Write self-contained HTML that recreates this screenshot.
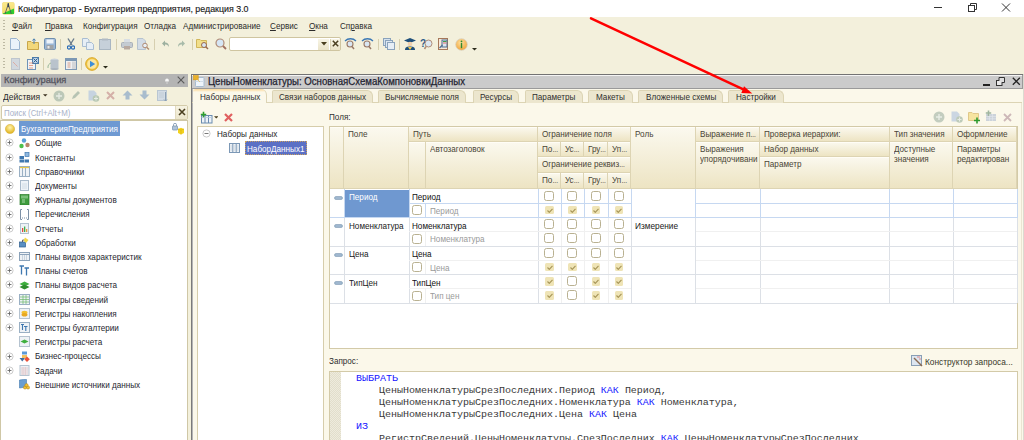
<!DOCTYPE html>
<html><head><meta charset="utf-8"><style>
html,body{margin:0;padding:0;width:1024px;height:440px;overflow:hidden;background:#F3F0DC}
body{position:relative;font-family:"Liberation Sans",sans-serif}
.r{position:absolute}
.t{position:absolute;white-space:nowrap;line-height:1;transform-origin:0 0}
.t u{text-decoration:underline;text-underline-offset:1px}
.el{font-style:normal;display:inline-block;transform:scaleX(.7);transform-origin:0 0}
.c{position:absolute;white-space:pre;font-family:"Liberation Mono",monospace;font-size:8.6px;line-height:1;color:#383838;transform:scaleX(1.16279);transform-origin:0 0}
.c .k,.c b.k{color:#1414FF;font-weight:normal}
</style></head><body>
<div class="r" style="left:0px;top:0px;width:1024px;height:17px;background:#fff"></div>
<svg class="r" style="left:1.5px;top:2px" width="13" height="13" viewBox="0 0 13 13">
<defs><linearGradient id="ig" x1="0" y1="0" x2="0" y2="1"><stop offset="0" stop-color="#FBEA8E"/><stop offset="1" stop-color="#F2D860"/></linearGradient></defs>
<rect x="0.3" y="0.3" width="12" height="12" rx="1.8" fill="url(#ig)" stroke="#F0D878" stroke-width="0.6"/>
<path d="M0.8 11.6 L12 6.5 L12 12 L0.8 12 Z" fill="#2ECC2E"/>
<path d="M6.3 2 L3 12 M6.3 2 L9.3 12" stroke="#4a5060" stroke-width="0.8" fill="none"/>
<rect x="5.6" y="1.2" width="1.4" height="4" fill="#3a4658"/>
</svg>
<div class="t" style="left:17.5px;top:4.78px;font-size:9.2px;transform:scaleX(0.9630434782608696);color:#1a1a1a;font-weight:normal;-webkit-text-stroke:0.15px #1a1a1a;">Конфигуратор - Бухгалтерия предприятия, редакция 3.0</div>
<div class="r" style="left:934px;top:7px;width:8px;height:1px;background:#333"></div>
<svg class="r" style="left:966px;top:3px" width="11" height="10"><rect x="2.5" y="2.5" width="6" height="6" fill="none" stroke="#333"/><path d="M4.5 2.5 V0.5 H10.5 V6.5 H8.5" fill="none" stroke="#333"/></svg>
<svg class="r" style="left:1001px;top:3px" width="10" height="9"><path d="M1 0.5 L9 8.5 M9 0.5 L1 8.5" stroke="#333" stroke-width="1"/></svg>
<div class="r" style="left:0px;top:17px;width:1024px;height:423px;background:#F3F0DC"></div>
<div class="r" style="left:2.5px;top:20px;width:2px;height:1.2px;background:#BDB9A3"></div>
<div class="r" style="left:2.5px;top:23px;width:2px;height:1.2px;background:#BDB9A3"></div>
<div class="r" style="left:2.5px;top:26px;width:2px;height:1.2px;background:#BDB9A3"></div>
<div class="r" style="left:2.5px;top:29px;width:2px;height:1.2px;background:#BDB9A3"></div>
<div class="t" style="left:12.3px;top:21.01px;font-size:9.4px;transform:scaleX(0.8670212765957445);color:#2b2b2b;font-weight:normal;"><u>Ф</u>айл</div>
<div class="t" style="left:44.8px;top:21.01px;font-size:9.4px;transform:scaleX(0.8670212765957445);color:#2b2b2b;font-weight:normal;"><u>П</u>равка</div>
<div class="t" style="left:82.6px;top:21.01px;font-size:9.4px;transform:scaleX(0.8670212765957445);color:#2b2b2b;font-weight:normal;">Конфигурация</div>
<div class="t" style="left:143.6px;top:21.01px;font-size:9.4px;transform:scaleX(0.8670212765957445);color:#2b2b2b;font-weight:normal;">Отладка</div>
<div class="t" style="left:182.7px;top:21.01px;font-size:9.4px;transform:scaleX(0.8670212765957445);color:#2b2b2b;font-weight:normal;">Администрирование</div>
<div class="t" style="left:270px;top:21.01px;font-size:9.4px;transform:scaleX(0.8670212765957445);color:#2b2b2b;font-weight:normal;"><u>С</u>ервис</div>
<div class="t" style="left:309px;top:21.01px;font-size:9.4px;transform:scaleX(0.8670212765957445);color:#2b2b2b;font-weight:normal;"><u>О</u>кна</div>
<div class="t" style="left:339.8px;top:21.01px;font-size:9.4px;transform:scaleX(0.8670212765957445);color:#2b2b2b;font-weight:normal;">Сп<u>р</u>авка</div>
<div class="r" style="left:2.5px;top:39px;width:2px;height:1.2px;background:#BDB9A3"></div>
<div class="r" style="left:2.5px;top:42px;width:2px;height:1.2px;background:#BDB9A3"></div>
<div class="r" style="left:2.5px;top:45px;width:2px;height:1.2px;background:#BDB9A3"></div>
<div class="r" style="left:2.5px;top:48px;width:2px;height:1.2px;background:#BDB9A3"></div>
<div class="r" style="left:2.5px;top:58px;width:2px;height:1.2px;background:#BDB9A3"></div>
<div class="r" style="left:2.5px;top:61px;width:2px;height:1.2px;background:#BDB9A3"></div>
<div class="r" style="left:2.5px;top:64px;width:2px;height:1.2px;background:#BDB9A3"></div>
<div class="r" style="left:2.5px;top:67px;width:2px;height:1.2px;background:#BDB9A3"></div>
<svg class="r" style="left:10px;top:38px" width="10" height="12" viewBox="0 0 10 12"><path d="M0.5 0.5 H6.5 L9.5 3.5 V11.5 H0.5 Z" fill="#EAF2FA" stroke="#9BB4CF"/></svg>
<svg class="r" style="left:27px;top:38px" width="12" height="12" viewBox="0 0 12 12"><path d="M0.5 3.5 H4 L5 4.5 H11.5 V11.5 H0.5 Z" fill="#F2D77A" stroke="#C9A64A"/><path d="M7 1 V6 M5.5 2.5 L7 0.8 L8.5 2.5" stroke="#4A7FB0" fill="none"/></svg>
<svg class="r" style="left:43.5px;top:38px" width="12" height="12" viewBox="0 0 12 12"><rect x="0.5" y="0.5" width="11" height="11" rx="1.2" fill="#9DB9D8" stroke="#6F8FAF"/><rect x="2.5" y="1.5" width="7" height="4" fill="#EEF4FA"/><rect x="2.5" y="7" width="7" height="4.5" fill="#A0A4A8"/><rect x="3.5" y="8" width="2" height="2.5" fill="#E8E8E8"/></svg>
<div class="r" style="left:60px;top:39px;width:1px;height:11px;background:#D6CFB0"></div>
<svg class="r" style="left:67px;top:38px" width="8" height="12" viewBox="0 0 8 12"><path d="M1 0.5 L5 7 M7 0.5 L3 7" stroke="#6A7B8C" stroke-width="1.4"/><circle cx="2" cy="9.5" r="1.6" fill="none" stroke="#2F6FB8" stroke-width="1.2"/><circle cx="6" cy="9.5" r="1.6" fill="none" stroke="#2F6FB8" stroke-width="1.2"/></svg>
<svg class="r" style="left:82px;top:38px" width="12" height="12" viewBox="0 0 12 12"><path d="M0.5 0.5 H5.5 L7 2 V8.5 H0.5 Z" fill="#E6EEF6" stroke="#A9BDD2"/><path d="M4.5 4.5 H9.5 L11.5 6.5 V11.5 H4.5 Z" fill="#E6EEF6" stroke="#A9BDD2"/></svg>
<svg class="r" style="left:99px;top:38px" width="12" height="12" viewBox="0 0 12 12"><rect x="0.5" y="1.5" width="11" height="10" fill="#C6D0DA" stroke="#A9B6C2"/><rect x="3" y="0.5" width="6" height="2" fill="#B0BAC4"/></svg>
<div class="r" style="left:115.5px;top:39px;width:1px;height:11px;background:#D6CFB0"></div>
<svg class="r" style="left:120.5px;top:38px" width="12" height="12" viewBox="0 0 12 12"><rect x="0.5" y="4.5" width="11" height="5" rx="1" fill="#C4CBD2" stroke="#A9B0B8"/><rect x="3" y="1" width="6" height="3.5" fill="#D8DEE4"/><rect x="3" y="8" width="6" height="3.5" fill="#B8A9A0"/></svg>
<svg class="r" style="left:137px;top:38px" width="13" height="12" viewBox="0 0 13 12"><path d="M0.5 0.5 H6 L8.5 3 V11.5 H0.5 Z" fill="#D3DCE6" stroke="#B6C3CF"/><circle cx="8" cy="7.5" r="2.3" fill="#E8EEF4" stroke="#B08A70"/><path d="M9.6 9.2 L12 11.5" stroke="#B08A70" stroke-width="1.4"/></svg>
<div class="r" style="left:153.5px;top:39px;width:1px;height:11px;background:#D6CFB0"></div>
<svg class="r" style="left:161.5px;top:40px" width="8" height="8" viewBox="0 0 8 8"><path d="M7 7 C7 3.5 5 2.5 3 2.5 V0.5 L0 3.5 L3 6.5 V4.5 C4.5 4.5 6 5 7 7Z" fill="#9DB0A0"/></svg>
<svg class="r" style="left:177px;top:40px" width="8" height="8" viewBox="0 0 8 8"><path d="M1 7 C1 3.5 3 2.5 5 2.5 V0.5 L8 3.5 L5 6.5 V4.5 C3.5 4.5 2 5 1 7Z" fill="#A8BBAA"/></svg>
<div class="r" style="left:191.5px;top:39px;width:1px;height:11px;background:#D6CFB0"></div>
<svg class="r" style="left:196px;top:38px" width="13" height="12" viewBox="0 0 13 12"><path d="M0.5 1.5 H4 L5 2.5 H10.5 V9.5 H0.5 Z" fill="#F2DF8A" stroke="#D1B65A"/><circle cx="8" cy="7" r="2.5" fill="#D9E6F2" stroke="#9A6A50"/><path d="M9.8 8.8 L12 11" stroke="#9A6A50" stroke-width="1.5"/></svg>
<svg class="r" style="left:215px;top:38px" width="12" height="12" viewBox="0 0 12 12"><circle cx="5" cy="5" r="4" fill="#D6E6F5" stroke="#B08C78" stroke-width="1.2"/><path d="M8 8 L11 11" stroke="#A07060" stroke-width="1.8"/></svg>
<div class="r" style="left:229px;top:37.3px;width:111.5px;height:13.5px;background:#fff;border:1px solid #CFC5A0;border-radius:2px;box-sizing:border-box"></div>
<div class="r" style="left:318px;top:38.5px;width:11px;height:11px;background:linear-gradient(#F8F5E6,#EAE3C8)"></div>
<div class="r" style="left:329.5px;top:38.5px;width:10.5px;height:11px;background:linear-gradient(#F8F5E6,#EAE3C8);border-left:1px solid #DDD5B8;box-sizing:border-box"></div>
<svg class="r" style="left:320.5px;top:42px" width="6" height="4" viewBox="0 0 6 4"><path d="M0 0 H6 L3 3.5Z" fill="#4a3f20"/></svg>
<svg class="r" style="left:331.5px;top:40px" width="7" height="7" viewBox="0 0 7 7"><path d="M0.8 0.8 L6.2 6.2 M6.2 0.8 L0.8 6.2" stroke="#4a3f20" stroke-width="1.5"/></svg>
<svg class="r" style="left:344px;top:38px" width="13" height="12" viewBox="0 0 13 12"><path d="M1 3 C4 0 9 0 12 3" stroke="#3B78B5" stroke-width="1.3" fill="none"/><circle cx="6" cy="6" r="3" fill="#D9E6F2" stroke="#9A7A68" stroke-width="1.1"/><path d="M8 8.5 L10 11" stroke="#9A7A68" stroke-width="1.5"/></svg>
<svg class="r" style="left:361px;top:38px" width="13" height="12" viewBox="0 0 13 12"><path d="M1 3 C4 0 9 0 12 3" stroke="#3B78B5" stroke-width="1.3" fill="none"/><circle cx="6" cy="6" r="3" fill="#D9E6F2" stroke="#9A7A68" stroke-width="1.1"/><path d="M8 8.5 L10 11" stroke="#9A7A68" stroke-width="1.5"/></svg>
<div class="r" style="left:377.5px;top:39px;width:1px;height:11px;background:#D6CFB0"></div>
<svg class="r" style="left:383px;top:38px" width="12" height="12" viewBox="0 0 12 12"><rect x="0.5" y="0.5" width="7" height="7" fill="#D5E2EE" stroke="#8AA3BC"/><rect x="2.5" y="2.5" width="7" height="7" fill="#DDE8F2" stroke="#8AA3BC"/><rect x="4.5" y="4.5" width="7" height="7" fill="#E6EEF6" stroke="#8AA3BC"/></svg>
<div class="r" style="left:398.5px;top:39px;width:1px;height:11px;background:#D6CFB0"></div>
<svg class="r" style="left:404px;top:38px" width="12" height="12" viewBox="0 0 12 12"><path d="M0 2.5 L6 0 L12 2.5 L6 5Z" fill="#1F4F7A"/><circle cx="6" cy="6" r="2.3" fill="#F2D2B0"/><path d="M1 12 C1 9 3 8.5 6 8.5 C9 8.5 11 9 11 12Z" fill="#1F4F7A"/><path d="M4 9 L6 12 L8 9" fill="#F2C94C"/></svg>
<svg class="r" style="left:420px;top:38px" width="13" height="12" viewBox="0 0 13 12"><text x="0" y="9" font-size="10" font-weight="bold" fill="#2A5A8A" font-family="Liberation Sans">?</text><circle cx="8.5" cy="5.5" r="3.5" fill="#DDE8F2" stroke="#B08C78"/><path d="M6 8.5 L4.5 11" stroke="#B08C78" stroke-width="1.5"/></svg>
<svg class="r" style="left:438px;top:38px" width="11" height="12" viewBox="0 0 11 12"><rect x="0.5" y="0.5" width="9" height="11" fill="#F8E8D8" stroke="#A6785A"/><rect x="4" y="2" width="5" height="7" fill="#DDE6EE" stroke="#4C6F94"/><path d="M5 3.5 H8.5" stroke="#3F9F4F"/><path d="M5 5 H8.5" stroke="#E26B6B"/><path d="M1.5 10 L4.5 7" stroke="#4C6F94" stroke-width="1.2"/></svg>
<svg class="r" style="left:455px;top:38px" width="13" height="13" viewBox="0 0 13 13"><defs><radialGradient id="og" cx="0.45" cy="0.35" r="0.65"><stop offset="0" stop-color="#FFE2A0"/><stop offset="1" stop-color="#F0A43A"/></radialGradient></defs><circle cx="6.5" cy="6.5" r="5.8" fill="url(#og)" stroke="#D8D0BE" stroke-width="0.8"/><circle cx="6.5" cy="3.4" r="0.9" fill="#2F8A2F"/><rect x="5.8" y="5" width="1.4" height="5.2" fill="#2F8A2F"/></svg>
<svg class="r" style="left:472px;top:47.5px" width="5" height="3" viewBox="0 0 5 3"><path d="M0 0 H5 L2.5 2.5Z" fill="#2b2b1b"/></svg>
<svg class="r" style="left:10.5px;top:57.5px" width="9" height="12" viewBox="0 0 9 12"><rect x="0.5" y="0.5" width="8" height="11" fill="#D2D8DE" stroke="#BFC6CD"/><path d="M2 4 L4.5 6.5 L6.5 8.5" stroke="#E0A090" fill="none" stroke-width="0.8"/></svg>
<svg class="r" style="left:27px;top:57.0px" width="12" height="13" viewBox="0 0 12 13"><rect x="0.5" y="2.5" width="8" height="10" fill="#F2F4F6" stroke="#6F93B8"/><rect x="5.5" y="0.5" width="6" height="6" fill="#BCD2E6" stroke="#4C7BAA"/><path d="M6.5 1.5 L10.5 5.5 M10.5 1.5 L6.5 5.5" stroke="#2F5F8F"/><path d="M2 6 H6 M2 8.5 H6 M2 11 H6" stroke="#E08A70" stroke-width="0.8"/></svg>
<div class="r" style="left:42.5px;top:58px;width:1px;height:12px;background:#D6CFB0"></div>
<svg class="r" style="left:47px;top:57.5px" width="12" height="12" viewBox="0 0 12 12"><ellipse cx="7.5" cy="2" rx="4" ry="1.6" fill="#C9D2DA"/><rect x="3.5" y="2" width="8" height="9" fill="#B9C3CC"/><ellipse cx="7.5" cy="11" rx="4" ry="1" fill="#A9B3BC"/><path d="M1 10 C0.5 7 2.5 5.5 4 5" stroke="#9AB89A" fill="none"/></svg>
<svg class="r" style="left:65px;top:57.5px" width="12" height="12" viewBox="0 0 12 12"><rect x="0.5" y="0.5" width="11" height="11" fill="#EEF0F2" stroke="#7C98B4"/><rect x="1" y="1" width="10" height="2" fill="#7C98B4"/><rect x="7" y="3.5" width="4" height="7.5" fill="#D4D6D8"/><path d="M2.5 5 H5.5 M2.5 7 H5.5 M2.5 9 H5.5" stroke="#D08A70" stroke-width="0.8"/></svg>
<div class="r" style="left:80.5px;top:58px;width:1px;height:12px;background:#D6CFB0"></div>
<svg class="r" style="left:85px;top:56.5px" width="14" height="14" viewBox="0 0 14 14"><circle cx="7" cy="7" r="6.3" fill="#F2C94C" stroke="#D9A520"/><circle cx="7" cy="7" r="4.8" fill="#FBE6A0"/><path d="M5 3.8 L10.2 7 L5 10.2Z" fill="#3E8ED8"/></svg>
<svg class="r" style="left:103px;top:66px" width="5" height="3" viewBox="0 0 5 3"><path d="M0 0 H5 L2.5 2.5Z" fill="#2b2b1b"/></svg>
<div class="r" style="left:1px;top:74px;width:187px;height:13px;background:#B4B4B4"></div>
<div class="t" style="left:3.5px;top:75.24px;font-size:9.6px;transform:scaleX(0.9687500000000001);color:#55555f;font-weight:normal;-webkit-text-stroke:0.3px #55555f;">Конфигурация</div>
<svg class="r" style="left:164px;top:76.5px" width="6" height="8" viewBox="0 0 6 8"><path d="M1.2 3.2 A1.8 1.8 0 0 1 4.8 3.2 V4.6 H1.2Z" fill="#F6F6F6"/><path d="M3 4.6 V7" stroke="#DADADA" stroke-width="0.8"/></svg>
<svg class="r" style="left:176.5px;top:75.8px" width="8" height="8" viewBox="0 0 8 8"><path d="M0.7 0.7 L7.3 7.3 M7.3 0.7 L0.7 7.3" stroke="#5c5c5c" stroke-width="1.15"/></svg>
<div class="t" style="left:3px;top:92.01px;font-size:9.4px;transform:scaleX(0.9042553191489361);color:#2b2b2b;font-weight:normal;">Действия</div>
<svg class="r" style="left:43px;top:94px" width="4.5" height="3" viewBox="0 0 4.5 3"><path d="M0 0.3 H4.5 L2.25 2.5Z" fill="#3b3320"/></svg>
<svg class="r" style="left:52.5px;top:90px" width="12" height="12" viewBox="0 0 12 12"><circle cx="6" cy="6" r="5.5" fill="#BCC8B8"/><path d="M6 3 V9 M3 6 H9" stroke="#E6ECE4" stroke-width="1.3"/></svg>
<svg class="r" style="left:71px;top:90px" width="10" height="10" viewBox="0 0 10 10"><path d="M1 9 L2 6 L7 1 L9 3 L4 8Z" fill="#B7C4B3"/></svg>
<svg class="r" style="left:88px;top:90px" width="12" height="12" viewBox="0 0 12 12"><path d="M0.5 0.5 H6 L8.5 3 V10.5 H0.5Z" fill="#C6D3E0"/><circle cx="8" cy="8.5" r="3.3" fill="#B8C8B4"/><path d="M8 6.5 V10.5 M6 8.5 H10" stroke="#E6ECE4"/></svg>
<svg class="r" style="left:106px;top:91px" width="9" height="9" viewBox="0 0 9 9"><path d="M1 1 L8 8 M8 1 L1 8" stroke="#D4B0A8" stroke-width="2"/></svg>
<svg class="r" style="left:122px;top:90px" width="11" height="10" viewBox="0 0 11 10"><path d="M5.5 0.5 L10.5 5.5 H7.5 V9.5 H3.5 V5.5 H0.5Z" fill="#A8BCCD"/></svg>
<svg class="r" style="left:139px;top:90px" width="11" height="10" viewBox="0 0 11 10"><path d="M5.5 9.5 L10.5 4.5 H7.5 V0.5 H3.5 V4.5 H0.5Z" fill="#A8BCCD"/></svg>
<svg class="r" style="left:157px;top:90px" width="11" height="12" viewBox="0 0 11 12"><rect x="0.5" y="0.5" width="9" height="10" fill="#D3DCE5" stroke="#B9C6D2"/><path d="M2 3 H7 M2 5 H7 M2 7 H7" stroke="#C0CCD6"/><path d="M8.5 2 V11 M7 9.5 L8.5 11 L10 9.5" stroke="#8CA0B4" fill="none"/></svg>
<div class="r" style="left:0.5px;top:105px;width:187.5px;height:14.5px;background:#fff;border:1px solid #D3CBAA;border-radius:2px;box-sizing:border-box"></div>
<div class="t" style="left:4px;top:107.51px;font-size:9.4px;transform:scaleX(0.8404255319148937);color:#A9B2C8;font-weight:normal;">Поиск (Ctrl+Alt+M)</div>
<div class="r" style="left:175px;top:106px;width:12px;height:12.5px;background:linear-gradient(#F6F3E2,#ECE6CC);border-left:1px solid #E2DAC0;box-sizing:border-box"></div>
<svg class="r" style="left:177.5px;top:108px" width="8" height="8" viewBox="0 0 8 8"><path d="M1 1 L7 7 M7 1 L1 7" stroke="#4a3f20" stroke-width="1.6"/></svg>
<div class="r" style="left:0px;top:120px;width:188px;height:320px;background:#fff;border:1px solid #CFC7A6;border-bottom:none;box-sizing:border-box"></div>
<div class="r" style="left:19px;top:121.2px;width:101px;height:14.4px;background:#6E99D2"></div>
<svg class="r" style="left:5px;top:123.5px" width="10" height="10" viewBox="0 0 10 10"><defs><radialGradient id="gy" cx="0.5" cy="0.35" r="0.6"><stop offset="0" stop-color="#FFF4B0"/><stop offset="1" stop-color="#E2B520"/></radialGradient></defs><circle cx="5" cy="5" r="4.6" fill="url(#gy)" stroke="#D9B340" stroke-width="0.6"/></svg>
<div class="t" style="left:21px;top:124.31px;font-size:9.4px;transform:scaleX(0.8670212765957445);color:#ffffff;font-weight:normal;">БухгалтерияПредприятия</div>
<svg class="r" style="left:171.5px;top:122.5px" width="13" height="12" viewBox="0 0 13 12"><rect x="0.5" y="3" width="5" height="4" rx="0.5" fill="#AFC3D8" stroke="#7690AA" stroke-width="0.7"/><path d="M1.5 3 V1.8 A1.5 1.5 0 0 1 4.5 1.8 V3" stroke="#7690AA" fill="none" stroke-width="0.8"/><path d="M6 6 L9 4.8 L12 6 V10 L9 11.5 L6 10Z" fill="#F2D21E"/><path d="M9 7 V11.5 M6 6 L9 7 L12 6" stroke="#D6B010" stroke-width="0.6" fill="none"/></svg>
<svg class="r" style="left:5px;top:138px" width="9" height="9" viewBox="0 0 9 9"><circle cx="4.5" cy="4.5" r="3.6" fill="#fff" stroke="#C4C4C4" stroke-width="0.9"/><path d="M4.5 2.5 V6.5 M2.5 4.5 H6.5" stroke="#6a6a6a" stroke-width="0.9"/></svg>
<svg class="r" style="left:19px;top:137.5px" width="11" height="11" viewBox="0 0 11 11"><circle cx="5" cy="2.5" r="2.2" fill="#5AA0D8"/><circle cx="2.5" cy="8" r="2.2" fill="#4CBF4C"/><circle cx="8.5" cy="7" r="2.2" fill="#B8866A"/></svg>
<div class="t" style="left:34.5px;top:138.41px;font-size:9.4px;transform:scaleX(0.8670212765957445);color:#1f1f2f;font-weight:normal;">Общие</div>
<svg class="r" style="left:5px;top:153px" width="9" height="9" viewBox="0 0 9 9"><circle cx="4.5" cy="4.5" r="3.6" fill="#fff" stroke="#C4C4C4" stroke-width="0.9"/><path d="M4.5 2.5 V6.5 M2.5 4.5 H6.5" stroke="#6a6a6a" stroke-width="0.9"/></svg>
<svg class="r" style="left:19px;top:151.7px" width="11" height="11" viewBox="0 0 11 11"><rect x="0.5" y="4" width="4.5" height="3" fill="#3F78B0"/><rect x="0.5" y="7.5" width="4.5" height="3" fill="#3F78B0"/><rect x="5.5" y="7.5" width="4.5" height="3" fill="#3F78B0"/><rect x="6" y="0.5" width="4" height="4" fill="#8FB8E0" stroke="#3F78B0" stroke-width="0.7"/></svg>
<div class="t" style="left:34.5px;top:152.61px;font-size:9.4px;transform:scaleX(0.8670212765957445);color:#1f1f2f;font-weight:normal;">Константы</div>
<svg class="r" style="left:5px;top:167px" width="9" height="9" viewBox="0 0 9 9"><circle cx="4.5" cy="4.5" r="3.6" fill="#fff" stroke="#C4C4C4" stroke-width="0.9"/><path d="M4.5 2.5 V6.5 M2.5 4.5 H6.5" stroke="#6a6a6a" stroke-width="0.9"/></svg>
<svg class="r" style="left:19px;top:165.9px" width="11" height="11" viewBox="0 0 11 11"><rect x="0.5" y="0.5" width="10" height="10" fill="#EEF2F6" stroke="#9AB0C4"/><path d="M3.5 1 V10 M6.5 1 V10" stroke="#9AB0C4"/><path d="M1 1.5 H10" stroke="#E8C84A" stroke-width="1.2"/></svg>
<div class="t" style="left:34.5px;top:166.81px;font-size:9.4px;transform:scaleX(0.8670212765957445);color:#1f1f2f;font-weight:normal;">Справочники</div>
<svg class="r" style="left:5px;top:181px" width="9" height="9" viewBox="0 0 9 9"><circle cx="4.5" cy="4.5" r="3.6" fill="#fff" stroke="#C4C4C4" stroke-width="0.9"/><path d="M4.5 2.5 V6.5 M2.5 4.5 H6.5" stroke="#6a6a6a" stroke-width="0.9"/></svg>
<svg class="r" style="left:19px;top:180.1px" width="11" height="11" viewBox="0 0 11 11"><rect x="1.5" y="0.5" width="8" height="10" fill="#EEF3F8" stroke="#A9BACB"/><path d="M3 4 H8 M3 6 H8 M3 8 H8" stroke="#C9D5E0" stroke-width="0.8"/></svg>
<div class="t" style="left:34.5px;top:181.01px;font-size:9.4px;transform:scaleX(0.8670212765957445);color:#1f1f2f;font-weight:normal;">Документы</div>
<svg class="r" style="left:5px;top:195px" width="9" height="9" viewBox="0 0 9 9"><circle cx="4.5" cy="4.5" r="3.6" fill="#fff" stroke="#C4C4C4" stroke-width="0.9"/><path d="M4.5 2.5 V6.5 M2.5 4.5 H6.5" stroke="#6a6a6a" stroke-width="0.9"/></svg>
<svg class="r" style="left:19px;top:194.3px" width="11" height="11" viewBox="0 0 11 11"><rect x="1" y="0.5" width="9" height="10.5" fill="#3E9C3E" stroke="#2E7E2E" stroke-width="0.7"/><rect x="2" y="1.5" width="7" height="3" fill="#7BC07B"/><path d="M3 6 H6 M3 8 H6" stroke="#C8E8C8" stroke-width="0.8"/></svg>
<div class="t" style="left:34.5px;top:195.21px;font-size:9.4px;transform:scaleX(0.8670212765957445);color:#1f1f2f;font-weight:normal;">Журналы документов</div>
<svg class="r" style="left:5px;top:210px" width="9" height="9" viewBox="0 0 9 9"><circle cx="4.5" cy="4.5" r="3.6" fill="#fff" stroke="#C4C4C4" stroke-width="0.9"/><path d="M4.5 2.5 V6.5 M2.5 4.5 H6.5" stroke="#6a6a6a" stroke-width="0.9"/></svg>
<svg class="r" style="left:19px;top:208.5px" width="11" height="11" viewBox="0 0 11 11"><path d="M3 0.5 H1.5 V10.5 H3 M8 0.5 H9.5 V10.5 H8" stroke="#7C90A6" fill="none"/><path d="M3 9 H8" stroke="#7C90A6" stroke-dasharray="1 1"/></svg>
<div class="t" style="left:34.5px;top:209.41px;font-size:9.4px;transform:scaleX(0.8670212765957445);color:#1f1f2f;font-weight:normal;">Перечисления</div>
<svg class="r" style="left:5px;top:224px" width="9" height="9" viewBox="0 0 9 9"><circle cx="4.5" cy="4.5" r="3.6" fill="#fff" stroke="#C4C4C4" stroke-width="0.9"/><path d="M4.5 2.5 V6.5 M2.5 4.5 H6.5" stroke="#6a6a6a" stroke-width="0.9"/></svg>
<svg class="r" style="left:19px;top:222.7px" width="11" height="11" viewBox="0 0 11 11"><rect x="1.5" y="0.5" width="8" height="10" fill="#EEF2F6" stroke="#B5C3D0"/><rect x="3" y="5" width="1.3" height="4" fill="#E24A3A"/><rect x="5" y="3.5" width="1.3" height="5.5" fill="#3FAF4F"/><rect x="7" y="6" width="1.3" height="3" fill="#E8A03A"/></svg>
<div class="t" style="left:34.5px;top:223.61px;font-size:9.4px;transform:scaleX(0.8670212765957445);color:#1f1f2f;font-weight:normal;">Отчеты</div>
<svg class="r" style="left:5px;top:238px" width="9" height="9" viewBox="0 0 9 9"><circle cx="4.5" cy="4.5" r="3.6" fill="#fff" stroke="#C4C4C4" stroke-width="0.9"/><path d="M4.5 2.5 V6.5 M2.5 4.5 H6.5" stroke="#6a6a6a" stroke-width="0.9"/></svg>
<svg class="r" style="left:19px;top:236.9px" width="11" height="11" viewBox="0 0 11 11"><rect x="0.5" y="5" width="6" height="5" fill="#5A8FC2" stroke="#2F5F8F" stroke-width="0.7"/><path d="M6 0.5 L9.5 3 L7 6 L4.5 3.5Z" fill="#F2D84A"/><path d="M3.5 5 V3 H5" stroke="#333" stroke-width="0.7" fill="none"/></svg>
<div class="t" style="left:34.5px;top:237.81px;font-size:9.4px;transform:scaleX(0.8670212765957445);color:#1f1f2f;font-weight:normal;">Обработки</div>
<svg class="r" style="left:5px;top:252px" width="9" height="9" viewBox="0 0 9 9"><circle cx="4.5" cy="4.5" r="3.6" fill="#fff" stroke="#C4C4C4" stroke-width="0.9"/><path d="M4.5 2.5 V6.5 M2.5 4.5 H6.5" stroke="#6a6a6a" stroke-width="0.9"/></svg>
<svg class="r" style="left:19px;top:251.1px" width="11" height="11" viewBox="0 0 11 11"><rect x="0.5" y="1.5" width="10" height="8" fill="#EEF2F6" stroke="#8CA3BA"/><path d="M1 3.5 H10" stroke="#8CA3BA"/><path d="M3.5 4 V9 M5.5 4 V9 M7.5 4 V9" stroke="#B0C0CE" stroke-width="0.6"/></svg>
<div class="t" style="left:34.5px;top:252.01px;font-size:9.4px;transform:scaleX(0.8670212765957445);color:#1f1f2f;font-weight:normal;">Планы видов характеристик</div>
<svg class="r" style="left:5px;top:266px" width="9" height="9" viewBox="0 0 9 9"><circle cx="4.5" cy="4.5" r="3.6" fill="#fff" stroke="#C4C4C4" stroke-width="0.9"/><path d="M4.5 2.5 V6.5 M2.5 4.5 H6.5" stroke="#6a6a6a" stroke-width="0.9"/></svg>
<svg class="r" style="left:19px;top:265.3px" width="11" height="11" viewBox="0 0 11 11"><path d="M0.5 1 H5 M2.5 1 V9.5 M5.5 3 H10 M7.5 3 V10.5" stroke="#3F78B0" stroke-width="1.3"/></svg>
<div class="t" style="left:34.5px;top:266.21px;font-size:9.4px;transform:scaleX(0.8670212765957445);color:#1f1f2f;font-weight:normal;">Планы счетов</div>
<svg class="r" style="left:5px;top:280px" width="9" height="9" viewBox="0 0 9 9"><circle cx="4.5" cy="4.5" r="3.6" fill="#fff" stroke="#C4C4C4" stroke-width="0.9"/><path d="M4.5 2.5 V6.5 M2.5 4.5 H6.5" stroke="#6a6a6a" stroke-width="0.9"/></svg>
<svg class="r" style="left:19px;top:279.5px" width="11" height="11" viewBox="0 0 11 11"><path d="M0.5 4 L5.5 1.5 L10.5 4 L5.5 6.5Z" fill="#3FAF3F"/><path d="M0.5 7 L5.5 4.5 L10.5 7 L5.5 9.5Z" fill="#2E8E2E"/></svg>
<div class="t" style="left:34.5px;top:280.41px;font-size:9.4px;transform:scaleX(0.8670212765957445);color:#1f1f2f;font-weight:normal;">Планы видов расчета</div>
<svg class="r" style="left:5px;top:295px" width="9" height="9" viewBox="0 0 9 9"><circle cx="4.5" cy="4.5" r="3.6" fill="#fff" stroke="#C4C4C4" stroke-width="0.9"/><path d="M4.5 2.5 V6.5 M2.5 4.5 H6.5" stroke="#6a6a6a" stroke-width="0.9"/></svg>
<svg class="r" style="left:19px;top:293.7px" width="11" height="11" viewBox="0 0 11 11"><rect x="0.5" y="0.5" width="10" height="10" fill="#EEF2F6" stroke="#9AB0C4"/><path d="M1 3 H10 M1 5.5 H10 M1 8 H10 M4 1 V10 M7 1 V10" stroke="#6CB86C" stroke-width="0.7"/></svg>
<div class="t" style="left:34.5px;top:294.61px;font-size:9.4px;transform:scaleX(0.8670212765957445);color:#1f1f2f;font-weight:normal;">Регистры сведений</div>
<svg class="r" style="left:5px;top:309px" width="9" height="9" viewBox="0 0 9 9"><circle cx="4.5" cy="4.5" r="3.6" fill="#fff" stroke="#C4C4C4" stroke-width="0.9"/><path d="M4.5 2.5 V6.5 M2.5 4.5 H6.5" stroke="#6a6a6a" stroke-width="0.9"/></svg>
<svg class="r" style="left:19px;top:307.9px" width="11" height="11" viewBox="0 0 11 11"><rect x="0.5" y="0.5" width="10" height="10" fill="#EEF2F6" stroke="#B5C3D0"/><ellipse cx="5.5" cy="4.5" rx="3" ry="1.8" fill="#F2C030"/><ellipse cx="5.5" cy="6.8" rx="3" ry="1.8" fill="#E8A820"/></svg>
<div class="t" style="left:34.5px;top:308.81px;font-size:9.4px;transform:scaleX(0.8670212765957445);color:#1f1f2f;font-weight:normal;">Регистры накопления</div>
<svg class="r" style="left:5px;top:323px" width="9" height="9" viewBox="0 0 9 9"><circle cx="4.5" cy="4.5" r="3.6" fill="#fff" stroke="#C4C4C4" stroke-width="0.9"/><path d="M4.5 2.5 V6.5 M2.5 4.5 H6.5" stroke="#6a6a6a" stroke-width="0.9"/></svg>
<svg class="r" style="left:19px;top:322.1px" width="11" height="11" viewBox="0 0 11 11"><rect x="0.5" y="0.5" width="10" height="10" fill="#EEF2F6" stroke="#9AB0C4"/><path d="M2 2.5 H5 M3.5 2.5 V8 M5 4.5 H8.5 M6.8 4.5 V9" stroke="#3F78B0" stroke-width="1.1"/></svg>
<div class="t" style="left:34.5px;top:323.01px;font-size:9.4px;transform:scaleX(0.8670212765957445);color:#1f1f2f;font-weight:normal;">Регистры бухгалтерии</div>
<svg class="r" style="left:19px;top:336.3px" width="11" height="11" viewBox="0 0 11 11"><rect x="0.5" y="0.5" width="10" height="10" fill="#EEF2F6" stroke="#B5C3D0"/><path d="M1.5 5.5 L5.5 3.5 L9.5 5.5 L5.5 7.5Z" fill="#3FAF3F"/></svg>
<div class="t" style="left:34.5px;top:337.21px;font-size:9.4px;transform:scaleX(0.8670212765957445);color:#1f1f2f;font-weight:normal;">Регистры расчета</div>
<svg class="r" style="left:5px;top:352px" width="9" height="9" viewBox="0 0 9 9"><circle cx="4.5" cy="4.5" r="3.6" fill="#fff" stroke="#C4C4C4" stroke-width="0.9"/><path d="M4.5 2.5 V6.5 M2.5 4.5 H6.5" stroke="#6a6a6a" stroke-width="0.9"/></svg>
<svg class="r" style="left:19px;top:350.5px" width="11" height="11" viewBox="0 0 11 11"><rect x="3" y="0.5" width="5" height="3" fill="#5A9AD8"/><rect x="3" y="4" width="5" height="3" fill="#F2C060"/><path d="M0.5 7 H6 L3.25 10.5Z" fill="#3F6F9F"/><path d="M8 5.5 L10.8 8.3 L8 11 L5.3 8.3Z" fill="#E8503A"/></svg>
<div class="t" style="left:34.5px;top:351.41px;font-size:9.4px;transform:scaleX(0.8670212765957445);color:#1f1f2f;font-weight:normal;">Бизнес-процессы</div>
<svg class="r" style="left:5px;top:366px" width="9" height="9" viewBox="0 0 9 9"><circle cx="4.5" cy="4.5" r="3.6" fill="#fff" stroke="#C4C4C4" stroke-width="0.9"/><path d="M4.5 2.5 V6.5 M2.5 4.5 H6.5" stroke="#6a6a6a" stroke-width="0.9"/></svg>
<svg class="r" style="left:19px;top:364.7px" width="11" height="11" viewBox="0 0 11 11"><rect x="1" y="0.5" width="9" height="10" fill="#EEF2F6" stroke="#B5C3D0"/><path d="M2.5 3 H8.5 M2.5 5 H8.5 M2.5 7 H8.5 M2.5 9 H8.5" stroke="#D08080" stroke-width="0.7" stroke-dasharray="1.2 0.6"/></svg>
<div class="t" style="left:34.5px;top:365.61px;font-size:9.4px;transform:scaleX(0.8670212765957445);color:#1f1f2f;font-weight:normal;">Задачи</div>
<svg class="r" style="left:19px;top:378.9px" width="11" height="11" viewBox="0 0 11 11"><path d="M0.5 1 L4.5 0.5 H7.5 V8 L0.5 9Z" fill="#6A9ED0" stroke="#3F78B0" stroke-width="0.6"/><circle cx="6" cy="8.5" r="1.6" fill="#F2C030" stroke="#B08010" stroke-width="0.5"/><circle cx="9" cy="8.5" r="1.6" fill="#F2C030" stroke="#B08010" stroke-width="0.5"/><circle cx="7.5" cy="6.2" r="1.6" fill="#F2C030" stroke="#B08010" stroke-width="0.5"/></svg>
<div class="t" style="left:34.5px;top:379.81px;font-size:9.4px;transform:scaleX(0.8670212765957445);color:#1f1f2f;font-weight:normal;">Внешние источники данных</div>
<div class="r" style="left:191px;top:74px;width:832px;height:366px;background:#FBF8EA"></div>
<div class="r" style="left:1022.5px;top:74px;width:1.5px;height:366px;background:#DCDAD0"></div>
<div class="r" style="left:191px;top:74px;width:831.5px;height:1px;background:#737373"></div>
<div class="r" style="left:191px;top:74px;width:1.3px;height:366px;background:#7A7A7A"></div>
<div class="r" style="left:192.3px;top:75px;width:0.8px;height:365px;background:#B5B5B5"></div>
<div class="r" style="left:192px;top:75px;width:830.5px;height:1px;background:#F4F4F4"></div>
<div class="r" style="left:192px;top:76px;width:830.5px;height:12.5px;background:#CBCBCB"></div>
<div class="r" style="left:1021.8px;top:75px;width:0.8px;height:14px;background:#9a9a9a"></div>
<div class="r" style="left:192px;top:88px;width:830.5px;height:0.8px;background:#9A9A9A"></div>
<svg class="r" style="left:193px;top:75px" width="12" height="13" viewBox="0 0 12 13"><rect x="2.5" y="2.5" width="8.5" height="9" rx="0.8" fill="#EEF4FA" stroke="#A8BCD0"/><rect x="2.5" y="6" width="8.5" height="1" fill="#D0DCE8"/><rect x="0.6" y="0.6" width="4.6" height="4.2" fill="#EAB22A" stroke="#D89A18" stroke-width="0.6"/><path d="M4.5 4.5 L7 7" stroke="#E0B860" stroke-width="0.8"/></svg>
<div class="t" style="left:208px;top:76.28px;font-size:10.5px;transform:scaleX(0.917142857142857);color:#1e1e30;font-weight:normal;-webkit-text-stroke:0.25px #1e1e30;">ЦеныНоменклатуры: ОсновнаяСхемаКомпоновкиДанных</div>
<div class="r" style="left:983px;top:84.2px;width:6.5px;height:1.4px;background:#222"></div>
<svg class="r" style="left:995.5px;top:76.5px" width="10" height="10" viewBox="0 0 10 10"><rect x="0.5" y="3.5" width="5.5" height="5" fill="#E8E8E8" stroke="#333"/><path d="M3 3.5 V0.5 H8.5 V5.5 H6" fill="#DDD" stroke="#333"/></svg>
<svg class="r" style="left:1011.5px;top:76.9px" width="9" height="9" viewBox="0 0 9 9"><path d="M0.8 0.8 L7.8 7.8 M7.8 0.8 L0.8 7.8" stroke="#222" stroke-width="1.3"/></svg>
<div class="r" style="left:192px;top:102.3px;width:830px;height:1px;background:#DCD4B4"></div>
<div class="r" style="left:193px;top:89.3px;width:73.5px;height:14px;background:linear-gradient(#F9D89A,#FCE7BE 1.5px,#FBF8EA 3px);border-right:1px solid #DCD4B4;border-radius:3px 6px 0 0;box-sizing:border-box"></div>
<div class="t" style="left:199.7px;top:92.01px;font-size:9.4px;transform:scaleX(0.8670212765957445);color:#2f2f2f;font-weight:normal;">Наборы данных</div>
<div class="r" style="left:271.7px;top:89.5px;width:101.60000000000002px;height:13px;background:#ECE6CE;border:1px solid #DCD4B4;border-bottom:none;border-radius:2px 6px 0 0;box-sizing:border-box"></div>
<div class="t" style="left:278.7px;top:92.01px;font-size:9.4px;transform:scaleX(0.8670212765957445);color:#2f2f2f;font-weight:normal;">Связи наборов данных</div>
<div class="r" style="left:378px;top:89.5px;width:88.30000000000001px;height:13px;background:#ECE6CE;border:1px solid #DCD4B4;border-bottom:none;border-radius:2px 6px 0 0;box-sizing:border-box"></div>
<div class="t" style="left:384.7px;top:92.01px;font-size:9.4px;transform:scaleX(0.8670212765957445);color:#2f2f2f;font-weight:normal;">Вычисляемые поля</div>
<div class="r" style="left:472.5px;top:89.5px;width:46.89999999999998px;height:13px;background:#ECE6CE;border:1px solid #DCD4B4;border-bottom:none;border-radius:2px 6px 0 0;box-sizing:border-box"></div>
<div class="t" style="left:479.5px;top:92.01px;font-size:9.4px;transform:scaleX(0.8670212765957445);color:#2f2f2f;font-weight:normal;">Ресурсы</div>
<div class="r" style="left:524.8px;top:89.5px;width:58.60000000000002px;height:13px;background:#ECE6CE;border:1px solid #DCD4B4;border-bottom:none;border-radius:2px 6px 0 0;box-sizing:border-box"></div>
<div class="t" style="left:531.5px;top:92.01px;font-size:9.4px;transform:scaleX(0.8670212765957445);color:#2f2f2f;font-weight:normal;">Параметры</div>
<div class="r" style="left:588.1px;top:89.5px;width:44.60000000000002px;height:13px;background:#ECE6CE;border:1px solid #DCD4B4;border-bottom:none;border-radius:2px 6px 0 0;box-sizing:border-box"></div>
<div class="t" style="left:595.6px;top:92.01px;font-size:9.4px;transform:scaleX(0.8670212765957445);color:#2f2f2f;font-weight:normal;">Макеты</div>
<div class="r" style="left:638px;top:89.5px;width:85.39999999999998px;height:13px;background:#ECE6CE;border:1px solid #DCD4B4;border-bottom:none;border-radius:2px 6px 0 0;box-sizing:border-box"></div>
<div class="t" style="left:645.6px;top:92.01px;font-size:9.4px;transform:scaleX(0.8670212765957445);color:#2f2f2f;font-weight:normal;">Вложенные схемы</div>
<div class="r" style="left:728px;top:89.5px;width:56.39999999999998px;height:13px;background:#ECE6CE;border:1px solid #DCD4B4;border-bottom:none;border-radius:2px 6px 0 0;box-sizing:border-box"></div>
<div class="t" style="left:736px;top:92.01px;font-size:9.4px;transform:scaleX(0.8670212765957445);color:#2f2f2f;font-weight:normal;">Настройки</div>
<div class="r" style="left:1021.3px;top:103px;width:1px;height:337px;background:#EAE5D2"></div>
<svg class="r" style="left:199.5px;top:111px" width="13" height="13" viewBox="0 0 13 13"><rect x="1.5" y="4.5" width="10.5" height="7.5" fill="#EEF3F8" stroke="#6A8CB0"/><path d="M5 5 V12 M8.5 5 V12" stroke="#6A8CB0"/><path d="M1.5 6.5 H12" stroke="#B8CADC" stroke-width="0.8"/><path d="M3.5 0.8 V6.2 M0.8 3.5 H6.2" stroke="#2EA02E" stroke-width="1.6"/></svg>
<svg class="r" style="left:213.5px;top:115.5px" width="4.5" height="3" viewBox="0 0 4.5 3"><path d="M0 0.3 H4.5 L2.25 2.5Z" fill="#4a3f20"/></svg>
<svg class="r" style="left:224px;top:112.5px" width="9" height="9" viewBox="0 0 9 9"><path d="M1 1 L8 8 M8 1 L1 8" stroke="#E06060" stroke-width="2.2"/></svg>
<div class="r" style="left:197px;top:126px;width:127px;height:314px;background:#fff;border:1px solid #D6CDAB;border-bottom:none;box-sizing:border-box"></div>
<svg class="r" style="left:202px;top:129px" width="9" height="9" viewBox="0 0 9 9"><circle cx="4.5" cy="4.5" r="3.6" fill="#fff" stroke="#C4C4C4" stroke-width="0.9"/><path d="M2.5 4.5 H6.5" stroke="#6a6a6a" stroke-width="0.9"/></svg>
<div class="t" style="left:217px;top:129.21px;font-size:9.4px;transform:scaleX(0.8670212765957445);color:#1f1f1f;font-weight:normal;">Наборы данных</div>
<svg class="r" style="left:229px;top:143px" width="11" height="10" viewBox="0 0 11 10"><rect x="0.5" y="0.5" width="10" height="9" fill="#EEF2F6" stroke="#7C98B6"/><path d="M3.8 1 V9 M7.2 1 V9" stroke="#7C98B6"/><path d="M1.5 3 H3 M1.5 5 H3 M1.5 7 H3 M4.8 3 H6.2 M4.8 5 H6.2 M4.8 7 H6.2 M8 3 H9.5 M8 5 H9.5 M8 7 H9.5" stroke="#B8C8D8" stroke-width="0.6"/></svg>
<div class="r" style="left:244.5px;top:141px;width:62px;height:14px;background:#5B70C5;outline:1px dotted #C9A060;outline-offset:-1px"></div>
<div class="t" style="left:246.5px;top:143.51px;font-size:9.4px;transform:scaleX(0.8670212765957445);color:#ffffff;font-weight:normal;">НаборДанных1</div>
<div class="t" style="left:328.8px;top:111.61px;font-size:9.4px;transform:scaleX(0.8670212765957445);color:#2f2f2f;font-weight:normal;">Поля:</div>
<div class="r" style="left:328.5px;top:126px;width:689.5px;height:222.5px;background:#fff;border:1px solid #D3CAA8;box-sizing:border-box"></div>
<div class="r" style="left:330px;top:127px;width:14px;height:62px;background:linear-gradient(#FBF9EF,#EDE4C3);border-right:1px solid #DDD4B3;border-bottom:1px solid #DDD4B3;box-sizing:border-box;box-shadow:inset 0 1px 0 #FFFDF6"></div>
<div class="r" style="left:344px;top:127px;width:65px;height:62px;background:linear-gradient(#FBF9EF,#EDE4C3);border-right:1px solid #DDD4B3;border-bottom:1px solid #DDD4B3;box-sizing:border-box;box-shadow:inset 0 1px 0 #FFFDF6"></div>
<div class="t" style="left:347.5px;top:129.11px;font-size:9.4px;transform:scaleX(0.8670212765957445);color:#4a4536;font-weight:normal;">Поле</div>
<div class="r" style="left:409px;top:127px;width:129px;height:15px;background:linear-gradient(#FBF9EF,#EDE4C3);border-right:1px solid #DDD4B3;border-bottom:1px solid #DDD4B3;box-sizing:border-box;box-shadow:inset 0 1px 0 #FFFDF6"></div>
<div class="t" style="left:412.5px;top:129.11px;font-size:9.4px;transform:scaleX(0.8670212765957445);color:#4a4536;font-weight:normal;">Путь</div>
<div class="r" style="left:409px;top:142px;width:17px;height:47px;background:linear-gradient(#FBF9EF,#EDE4C3);border-right:1px solid #DDD4B3;border-bottom:1px solid #DDD4B3;box-sizing:border-box;box-shadow:inset 0 1px 0 #FFFDF6"></div>
<div class="r" style="left:426px;top:142px;width:112px;height:47px;background:linear-gradient(#FBF9EF,#EDE4C3);border-right:1px solid #DDD4B3;border-bottom:1px solid #DDD4B3;box-sizing:border-box;box-shadow:inset 0 1px 0 #FFFDF6"></div>
<div class="t" style="left:429.5px;top:144.11px;font-size:9.4px;transform:scaleX(0.8670212765957445);color:#4a4536;font-weight:normal;">Автозаголовок</div>
<div class="r" style="left:538px;top:127px;width:93px;height:15px;background:linear-gradient(#FBF9EF,#EDE4C3);border-right:1px solid #DDD4B3;border-bottom:1px solid #DDD4B3;box-sizing:border-box;box-shadow:inset 0 1px 0 #FFFDF6"></div>
<div class="t" style="left:541.5px;top:129.11px;font-size:9.4px;transform:scaleX(0.8670212765957445);color:#4a4536;font-weight:normal;">Ограничение поля</div>
<div class="r" style="left:538px;top:142px;width:23px;height:15px;background:linear-gradient(#FBF9EF,#EDE4C3);border-right:1px solid #DDD4B3;border-bottom:1px solid #DDD4B3;box-sizing:border-box;box-shadow:inset 0 1px 0 #FFFDF6"></div>
<div class="t" style="left:541.5px;top:144.11px;font-size:9.4px;transform:scaleX(0.8670212765957445);color:#4a4536;font-weight:normal;">По<i class="el">…</i></div>
<div class="r" style="left:538px;top:173px;width:23px;height:16px;background:linear-gradient(#FBF9EF,#EDE4C3);border-right:1px solid #DDD4B3;border-bottom:1px solid #DDD4B3;box-sizing:border-box;box-shadow:inset 0 1px 0 #FFFDF6"></div>
<div class="t" style="left:541.5px;top:175.11px;font-size:9.4px;transform:scaleX(0.8670212765957445);color:#4a4536;font-weight:normal;">По<i class="el">…</i></div>
<div class="r" style="left:561px;top:142px;width:23px;height:15px;background:linear-gradient(#FBF9EF,#EDE4C3);border-right:1px solid #DDD4B3;border-bottom:1px solid #DDD4B3;box-sizing:border-box;box-shadow:inset 0 1px 0 #FFFDF6"></div>
<div class="t" style="left:564.5px;top:144.11px;font-size:9.4px;transform:scaleX(0.8670212765957445);color:#4a4536;font-weight:normal;">Ус<i class="el">…</i></div>
<div class="r" style="left:561px;top:173px;width:23px;height:16px;background:linear-gradient(#FBF9EF,#EDE4C3);border-right:1px solid #DDD4B3;border-bottom:1px solid #DDD4B3;box-sizing:border-box;box-shadow:inset 0 1px 0 #FFFDF6"></div>
<div class="t" style="left:564.5px;top:175.11px;font-size:9.4px;transform:scaleX(0.8670212765957445);color:#4a4536;font-weight:normal;">Ус<i class="el">…</i></div>
<div class="r" style="left:584px;top:142px;width:24px;height:15px;background:linear-gradient(#FBF9EF,#EDE4C3);border-right:1px solid #DDD4B3;border-bottom:1px solid #DDD4B3;box-sizing:border-box;box-shadow:inset 0 1px 0 #FFFDF6"></div>
<div class="t" style="left:587.5px;top:144.11px;font-size:9.4px;transform:scaleX(0.8670212765957445);color:#4a4536;font-weight:normal;">Гру<i class="el">…</i></div>
<div class="r" style="left:584px;top:173px;width:24px;height:16px;background:linear-gradient(#FBF9EF,#EDE4C3);border-right:1px solid #DDD4B3;border-bottom:1px solid #DDD4B3;box-sizing:border-box;box-shadow:inset 0 1px 0 #FFFDF6"></div>
<div class="t" style="left:587.5px;top:175.11px;font-size:9.4px;transform:scaleX(0.8670212765957445);color:#4a4536;font-weight:normal;">Гру<i class="el">…</i></div>
<div class="r" style="left:608px;top:142px;width:23px;height:15px;background:linear-gradient(#FBF9EF,#EDE4C3);border-right:1px solid #DDD4B3;border-bottom:1px solid #DDD4B3;box-sizing:border-box;box-shadow:inset 0 1px 0 #FFFDF6"></div>
<div class="t" style="left:611.5px;top:144.11px;font-size:9.4px;transform:scaleX(0.8670212765957445);color:#4a4536;font-weight:normal;">Уп<i class="el">…</i></div>
<div class="r" style="left:608px;top:173px;width:23px;height:16px;background:linear-gradient(#FBF9EF,#EDE4C3);border-right:1px solid #DDD4B3;border-bottom:1px solid #DDD4B3;box-sizing:border-box;box-shadow:inset 0 1px 0 #FFFDF6"></div>
<div class="t" style="left:611.5px;top:175.11px;font-size:9.4px;transform:scaleX(0.8670212765957445);color:#4a4536;font-weight:normal;">Уп<i class="el">…</i></div>
<div class="r" style="left:538px;top:157px;width:93px;height:16px;background:linear-gradient(#FBF9EF,#EDE4C3);border-right:1px solid #DDD4B3;border-bottom:1px solid #DDD4B3;box-sizing:border-box;box-shadow:inset 0 1px 0 #FFFDF6"></div>
<div class="t" style="left:541.5px;top:159.11px;font-size:9.4px;transform:scaleX(0.8670212765957445);color:#4a4536;font-weight:normal;">Ограничение реквиз<i class="el">…</i></div>
<div class="r" style="left:631px;top:127px;width:65px;height:62px;background:linear-gradient(#FBF9EF,#EDE4C3);border-right:1px solid #DDD4B3;border-bottom:1px solid #DDD4B3;box-sizing:border-box;box-shadow:inset 0 1px 0 #FFFDF6"></div>
<div class="t" style="left:634.5px;top:129.11px;font-size:9.4px;transform:scaleX(0.8670212765957445);color:#4a4536;font-weight:normal;">Роль</div>
<div class="r" style="left:696px;top:127px;width:64px;height:15px;background:linear-gradient(#FBF9EF,#EDE4C3);border-right:1px solid #DDD4B3;border-bottom:1px solid #DDD4B3;box-sizing:border-box;box-shadow:inset 0 1px 0 #FFFDF6"></div>
<div class="t" style="left:699.5px;top:129.11px;font-size:9.4px;transform:scaleX(0.8670212765957445);color:#4a4536;font-weight:normal;">Выражение п<i class="el">…</i></div>
<div class="r" style="left:696px;top:142px;width:64px;height:47px;background:linear-gradient(#FBF9EF,#EDE4C3);border-right:1px solid #DDD4B3;border-bottom:1px solid #DDD4B3;box-sizing:border-box;box-shadow:inset 0 1px 0 #FFFDF6"></div>
<div class="t" style="left:699.5px;top:144.11px;font-size:9.4px;transform:scaleX(0.8670212765957445);color:#4a4536;font-weight:normal;">Выражения</div>
<div class="t" style="left:699.5px;top:154.11px;font-size:9.4px;transform:scaleX(0.8670212765957445);color:#4a4536;font-weight:normal;">упорядочивани</div>
<div class="r" style="left:760px;top:127px;width:130px;height:15px;background:linear-gradient(#FBF9EF,#EDE4C3);border-right:1px solid #DDD4B3;border-bottom:1px solid #DDD4B3;box-sizing:border-box;box-shadow:inset 0 1px 0 #FFFDF6"></div>
<div class="t" style="left:763.5px;top:129.11px;font-size:9.4px;transform:scaleX(0.8670212765957445);color:#4a4536;font-weight:normal;">Проверка иерархии:</div>
<div class="r" style="left:760px;top:142px;width:130px;height:15px;background:linear-gradient(#FBF9EF,#EDE4C3);border-right:1px solid #DDD4B3;border-bottom:1px solid #DDD4B3;box-sizing:border-box;box-shadow:inset 0 1px 0 #FFFDF6"></div>
<div class="t" style="left:763.5px;top:144.11px;font-size:9.4px;transform:scaleX(0.8670212765957445);color:#4a4536;font-weight:normal;">Набор данных</div>
<div class="r" style="left:760px;top:157px;width:130px;height:32px;background:linear-gradient(#FBF9EF,#EDE4C3);border-right:1px solid #DDD4B3;border-bottom:1px solid #DDD4B3;box-sizing:border-box;box-shadow:inset 0 1px 0 #FFFDF6"></div>
<div class="t" style="left:763.5px;top:159.11px;font-size:9.4px;transform:scaleX(0.8670212765957445);color:#4a4536;font-weight:normal;">Параметр</div>
<div class="r" style="left:890px;top:127px;width:63px;height:15px;background:linear-gradient(#FBF9EF,#EDE4C3);border-right:1px solid #DDD4B3;border-bottom:1px solid #DDD4B3;box-sizing:border-box;box-shadow:inset 0 1px 0 #FFFDF6"></div>
<div class="t" style="left:893.5px;top:129.11px;font-size:9.4px;transform:scaleX(0.8670212765957445);color:#4a4536;font-weight:normal;">Тип значения</div>
<div class="r" style="left:890px;top:142px;width:63px;height:47px;background:linear-gradient(#FBF9EF,#EDE4C3);border-right:1px solid #DDD4B3;border-bottom:1px solid #DDD4B3;box-sizing:border-box;box-shadow:inset 0 1px 0 #FFFDF6"></div>
<div class="t" style="left:893.5px;top:144.11px;font-size:9.4px;transform:scaleX(0.8670212765957445);color:#4a4536;font-weight:normal;">Доступные</div>
<div class="t" style="left:893.5px;top:154.11px;font-size:9.4px;transform:scaleX(0.8670212765957445);color:#4a4536;font-weight:normal;">значения</div>
<div class="r" style="left:953px;top:127px;width:64px;height:15px;background:linear-gradient(#FBF9EF,#EDE4C3);border-right:1px solid #DDD4B3;border-bottom:1px solid #DDD4B3;box-sizing:border-box;box-shadow:inset 0 1px 0 #FFFDF6"></div>
<div class="t" style="left:956.5px;top:129.11px;font-size:9.4px;transform:scaleX(0.8670212765957445);color:#4a4536;font-weight:normal;">Оформление</div>
<div class="r" style="left:953px;top:142px;width:64px;height:47px;background:linear-gradient(#FBF9EF,#EDE4C3);border-right:1px solid #DDD4B3;border-bottom:1px solid #DDD4B3;box-sizing:border-box;box-shadow:inset 0 1px 0 #FFFDF6"></div>
<div class="t" style="left:956.5px;top:144.11px;font-size:9.4px;transform:scaleX(0.8670212765957445);color:#4a4536;font-weight:normal;">Параметры</div>
<div class="t" style="left:956.5px;top:154.11px;font-size:9.4px;transform:scaleX(0.8670212765957445);color:#4a4536;font-weight:normal;">редактирован</div>
<div class="r" style="left:344.4px;top:189.9px;width:64.9px;height:28px;background:#6F98D0"></div>
<div class="r" style="left:343.9px;top:189.4px;width:1px;height:28.5px;background:#C6D8F1"></div>
<div class="r" style="left:408.8px;top:189.4px;width:1px;height:28.5px;background:#C6D8F1"></div>
<div class="r" style="left:538.0px;top:189.4px;width:1px;height:28.5px;background:#C6D8F1"></div>
<div class="r" style="left:630.8px;top:189.4px;width:1px;height:28.5px;background:#C6D8F1"></div>
<div class="r" style="left:695.3px;top:189.4px;width:1px;height:28.5px;background:#C6D8F1"></div>
<div class="r" style="left:760.0px;top:189.4px;width:1px;height:28.5px;background:#C6D8F1"></div>
<div class="r" style="left:889.0px;top:189.4px;width:1px;height:28.5px;background:#C6D8F1"></div>
<div class="r" style="left:952.5px;top:189.4px;width:1px;height:28.5px;background:#C6D8F1"></div>
<div class="r" style="left:1016.5px;top:189.4px;width:1px;height:28.5px;background:#C6D8F1"></div>
<div class="r" style="left:560.8px;top:189.4px;width:1px;height:28.5px;background:#C6D8F1"></div>
<div class="r" style="left:584.0px;top:189.4px;width:1px;height:28.5px;background:#C6D8F1"></div>
<div class="r" style="left:607.7px;top:189.4px;width:1px;height:28.5px;background:#C6D8F1"></div>
<div class="r" style="left:425px;top:203.4px;width:1px;height:14.5px;background:#C6D8F1"></div>
<div class="r" style="left:409.3px;top:202.9px;width:222px;height:1px;background:#C6D8F1"></div>
<div class="r" style="left:695.8px;top:202.9px;width:321.2px;height:1px;background:#C6D8F1"></div>
<div class="r" style="left:343.9px;top:217.9px;width:1px;height:28.5px;background:#DCE0E6"></div>
<div class="r" style="left:408.8px;top:217.9px;width:1px;height:28.5px;background:#DCE0E6"></div>
<div class="r" style="left:538.0px;top:217.9px;width:1px;height:28.5px;background:#DCE0E6"></div>
<div class="r" style="left:630.8px;top:217.9px;width:1px;height:28.5px;background:#DCE0E6"></div>
<div class="r" style="left:695.3px;top:217.9px;width:1px;height:28.5px;background:#DCE0E6"></div>
<div class="r" style="left:760.0px;top:217.9px;width:1px;height:28.5px;background:#DCE0E6"></div>
<div class="r" style="left:889.0px;top:217.9px;width:1px;height:28.5px;background:#DCE0E6"></div>
<div class="r" style="left:952.5px;top:217.9px;width:1px;height:28.5px;background:#DCE0E6"></div>
<div class="r" style="left:1016.5px;top:217.9px;width:1px;height:28.5px;background:#DCE0E6"></div>
<div class="r" style="left:560.8px;top:217.9px;width:1px;height:28.5px;background:#F0F0F0"></div>
<div class="r" style="left:584.0px;top:217.9px;width:1px;height:28.5px;background:#F0F0F0"></div>
<div class="r" style="left:607.7px;top:217.9px;width:1px;height:28.5px;background:#F0F0F0"></div>
<div class="r" style="left:425px;top:231.9px;width:1px;height:14.5px;background:#F0F0F0"></div>
<div class="r" style="left:409.3px;top:231.4px;width:222px;height:1px;background:#F0F0F0"></div>
<div class="r" style="left:695.8px;top:231.4px;width:321.2px;height:1px;background:#F0F0F0"></div>
<div class="r" style="left:343.9px;top:246.4px;width:1px;height:28.49999999999997px;background:#DCE0E6"></div>
<div class="r" style="left:408.8px;top:246.4px;width:1px;height:28.49999999999997px;background:#DCE0E6"></div>
<div class="r" style="left:538.0px;top:246.4px;width:1px;height:28.49999999999997px;background:#DCE0E6"></div>
<div class="r" style="left:630.8px;top:246.4px;width:1px;height:28.49999999999997px;background:#DCE0E6"></div>
<div class="r" style="left:695.3px;top:246.4px;width:1px;height:28.49999999999997px;background:#DCE0E6"></div>
<div class="r" style="left:760.0px;top:246.4px;width:1px;height:28.49999999999997px;background:#DCE0E6"></div>
<div class="r" style="left:889.0px;top:246.4px;width:1px;height:28.49999999999997px;background:#DCE0E6"></div>
<div class="r" style="left:952.5px;top:246.4px;width:1px;height:28.49999999999997px;background:#DCE0E6"></div>
<div class="r" style="left:1016.5px;top:246.4px;width:1px;height:28.49999999999997px;background:#DCE0E6"></div>
<div class="r" style="left:560.8px;top:246.4px;width:1px;height:28.49999999999997px;background:#F0F0F0"></div>
<div class="r" style="left:584.0px;top:246.4px;width:1px;height:28.49999999999997px;background:#F0F0F0"></div>
<div class="r" style="left:607.7px;top:246.4px;width:1px;height:28.49999999999997px;background:#F0F0F0"></div>
<div class="r" style="left:425px;top:260.4px;width:1px;height:14.5px;background:#F0F0F0"></div>
<div class="r" style="left:409.3px;top:259.9px;width:222px;height:1px;background:#F0F0F0"></div>
<div class="r" style="left:695.8px;top:259.9px;width:321.2px;height:1px;background:#F0F0F0"></div>
<div class="r" style="left:343.9px;top:274.9px;width:1px;height:28.5px;background:#DCE0E6"></div>
<div class="r" style="left:408.8px;top:274.9px;width:1px;height:28.5px;background:#DCE0E6"></div>
<div class="r" style="left:538.0px;top:274.9px;width:1px;height:28.5px;background:#DCE0E6"></div>
<div class="r" style="left:630.8px;top:274.9px;width:1px;height:28.5px;background:#DCE0E6"></div>
<div class="r" style="left:695.3px;top:274.9px;width:1px;height:28.5px;background:#DCE0E6"></div>
<div class="r" style="left:760.0px;top:274.9px;width:1px;height:28.5px;background:#DCE0E6"></div>
<div class="r" style="left:889.0px;top:274.9px;width:1px;height:28.5px;background:#DCE0E6"></div>
<div class="r" style="left:952.5px;top:274.9px;width:1px;height:28.5px;background:#DCE0E6"></div>
<div class="r" style="left:1016.5px;top:274.9px;width:1px;height:28.5px;background:#DCE0E6"></div>
<div class="r" style="left:560.8px;top:274.9px;width:1px;height:28.5px;background:#F0F0F0"></div>
<div class="r" style="left:584.0px;top:274.9px;width:1px;height:28.5px;background:#F0F0F0"></div>
<div class="r" style="left:607.7px;top:274.9px;width:1px;height:28.5px;background:#F0F0F0"></div>
<div class="r" style="left:425px;top:288.9px;width:1px;height:14.5px;background:#F0F0F0"></div>
<div class="r" style="left:409.3px;top:288.4px;width:222px;height:1px;background:#F0F0F0"></div>
<div class="r" style="left:695.8px;top:288.4px;width:321.2px;height:1px;background:#F0F0F0"></div>
<div class="r" style="left:329.5px;top:217.4px;width:687.5px;height:1px;background:#C6D8F1"></div>
<svg class="r" style="left:334px;top:195.9px" width="9" height="4" viewBox="0 0 9 4"><rect x="0.5" y="0.5" width="8" height="3" rx="1.5" fill="#9FB7CF" stroke="#7D98B3" stroke-width="0.6"/></svg>
<div class="t" style="left:348.5px;top:192.41px;font-size:9.4px;transform:scaleX(0.8670212765957445);color:#ffffff;font-weight:normal;">Период</div>
<div class="t" style="left:412px;top:192.41px;font-size:9.4px;transform:scaleX(0.8670212765957445);color:#111111;font-weight:normal;">Период</div>
<div class="r" style="left:412.3px;top:205.20000000000002px;width:10px;height:10px;background:#fff;border:1px solid #B9B191;border-radius:2.5px;box-sizing:border-box"></div>
<div class="t" style="left:430px;top:205.91px;font-size:9.4px;transform:scaleX(0.8670212765957445);color:#9a9a9a;font-weight:normal;">Период</div>
<div class="r" style="left:329.5px;top:245.9px;width:687.5px;height:1px;background:#DCE0E6"></div>
<svg class="r" style="left:334px;top:224.4px" width="9" height="4" viewBox="0 0 9 4"><rect x="0.5" y="0.5" width="8" height="3" rx="1.5" fill="#9FB7CF" stroke="#7D98B3" stroke-width="0.6"/></svg>
<div class="t" style="left:348.5px;top:220.91px;font-size:9.4px;transform:scaleX(0.8670212765957445);color:#1a1a1a;font-weight:normal;">Номенклатура</div>
<div class="t" style="left:412px;top:220.91px;font-size:9.4px;transform:scaleX(0.8670212765957445);color:#111111;font-weight:normal;">Номенклатура</div>
<div class="r" style="left:412.3px;top:233.70000000000002px;width:10px;height:10px;background:#fff;border:1px solid #B9B191;border-radius:2.5px;box-sizing:border-box"></div>
<div class="t" style="left:430px;top:234.41px;font-size:9.4px;transform:scaleX(0.8670212765957445);color:#9a9a9a;font-weight:normal;">Номенклатура</div>
<div class="r" style="left:329.5px;top:274.4px;width:687.5px;height:1px;background:#DCE0E6"></div>
<svg class="r" style="left:334px;top:252.9px" width="9" height="4" viewBox="0 0 9 4"><rect x="0.5" y="0.5" width="8" height="3" rx="1.5" fill="#9FB7CF" stroke="#7D98B3" stroke-width="0.6"/></svg>
<div class="t" style="left:348.5px;top:249.41px;font-size:9.4px;transform:scaleX(0.8670212765957445);color:#1a1a1a;font-weight:normal;">Цена</div>
<div class="t" style="left:412px;top:249.41px;font-size:9.4px;transform:scaleX(0.8670212765957445);color:#111111;font-weight:normal;">Цена</div>
<div class="r" style="left:412.3px;top:262.2px;width:10px;height:10px;background:#fff;border:1px solid #B9B191;border-radius:2.5px;box-sizing:border-box"></div>
<div class="t" style="left:430px;top:262.91px;font-size:9.4px;transform:scaleX(0.8670212765957445);color:#9a9a9a;font-weight:normal;">Цена</div>
<div class="r" style="left:329.5px;top:302.9px;width:687.5px;height:1px;background:#DCE0E6"></div>
<svg class="r" style="left:334px;top:281.4px" width="9" height="4" viewBox="0 0 9 4"><rect x="0.5" y="0.5" width="8" height="3" rx="1.5" fill="#9FB7CF" stroke="#7D98B3" stroke-width="0.6"/></svg>
<div class="t" style="left:348.5px;top:277.91px;font-size:9.4px;transform:scaleX(0.8670212765957445);color:#1a1a1a;font-weight:normal;">ТипЦен</div>
<div class="t" style="left:412px;top:277.91px;font-size:9.4px;transform:scaleX(0.8670212765957445);color:#111111;font-weight:normal;">ТипЦен</div>
<div class="r" style="left:412.3px;top:290.7px;width:10px;height:10px;background:#fff;border:1px solid #B9B191;border-radius:2.5px;box-sizing:border-box"></div>
<div class="t" style="left:430px;top:291.41px;font-size:9.4px;transform:scaleX(0.8670212765957445);color:#9a9a9a;font-weight:normal;">Тип цен</div>
<div class="r" style="left:544.3px;top:190.8px;width:10px;height:10px;background:#fff;border:1px solid #B9B191;border-radius:2.5px;box-sizing:border-box"></div>
<div class="r" style="left:567.3px;top:190.8px;width:10px;height:10px;background:#fff;border:1px solid #B9B191;border-radius:2.5px;box-sizing:border-box"></div>
<div class="r" style="left:590.8px;top:190.8px;width:10px;height:10px;background:#fff;border:1px solid #B9B191;border-radius:2.5px;box-sizing:border-box"></div>
<div class="r" style="left:613.8px;top:190.8px;width:10px;height:10px;background:#fff;border:1px solid #B9B191;border-radius:2.5px;box-sizing:border-box"></div>
<div class="r" style="left:545.3px;top:205.9px;width:8.5px;height:8.5px;background:#EFE4B6;border-radius:1.5px"></div>
<svg class="r" style="left:546.8px;top:207.9px" width="6" height="5" viewBox="0 0 6 5"><path d="M0.5 2.5 L2.3 4.3 L5.5 0.8" stroke="#A8975A" stroke-width="1.2" fill="none"/></svg>
<div class="r" style="left:568.3px;top:205.9px;width:8.5px;height:8.5px;background:#EFE4B6;border-radius:1.5px"></div>
<svg class="r" style="left:569.8px;top:207.9px" width="6" height="5" viewBox="0 0 6 5"><path d="M0.5 2.5 L2.3 4.3 L5.5 0.8" stroke="#A8975A" stroke-width="1.2" fill="none"/></svg>
<div class="r" style="left:591.8px;top:205.9px;width:8.5px;height:8.5px;background:#EFE4B6;border-radius:1.5px"></div>
<svg class="r" style="left:593.3px;top:207.9px" width="6" height="5" viewBox="0 0 6 5"><path d="M0.5 2.5 L2.3 4.3 L5.5 0.8" stroke="#A8975A" stroke-width="1.2" fill="none"/></svg>
<div class="r" style="left:614.8px;top:205.9px;width:8.5px;height:8.5px;background:#EFE4B6;border-radius:1.5px"></div>
<svg class="r" style="left:616.3px;top:207.9px" width="6" height="5" viewBox="0 0 6 5"><path d="M0.5 2.5 L2.3 4.3 L5.5 0.8" stroke="#A8975A" stroke-width="1.2" fill="none"/></svg>
<div class="r" style="left:544.3px;top:219.3px;width:10px;height:10px;background:#fff;border:1px solid #B9B191;border-radius:2.5px;box-sizing:border-box"></div>
<div class="r" style="left:567.3px;top:219.3px;width:10px;height:10px;background:#fff;border:1px solid #B9B191;border-radius:2.5px;box-sizing:border-box"></div>
<div class="r" style="left:590.8px;top:219.3px;width:10px;height:10px;background:#fff;border:1px solid #B9B191;border-radius:2.5px;box-sizing:border-box"></div>
<div class="r" style="left:613.8px;top:219.3px;width:10px;height:10px;background:#fff;border:1px solid #B9B191;border-radius:2.5px;box-sizing:border-box"></div>
<div class="r" style="left:544.3px;top:233.3px;width:10px;height:10px;background:#fff;border:1px solid #B9B191;border-radius:2.5px;box-sizing:border-box"></div>
<div class="r" style="left:567.3px;top:233.3px;width:10px;height:10px;background:#fff;border:1px solid #B9B191;border-radius:2.5px;box-sizing:border-box"></div>
<div class="r" style="left:590.8px;top:233.3px;width:10px;height:10px;background:#fff;border:1px solid #B9B191;border-radius:2.5px;box-sizing:border-box"></div>
<div class="r" style="left:613.8px;top:233.3px;width:10px;height:10px;background:#fff;border:1px solid #B9B191;border-radius:2.5px;box-sizing:border-box"></div>
<div class="r" style="left:544.3px;top:247.8px;width:10px;height:10px;background:#fff;border:1px solid #B9B191;border-radius:2.5px;box-sizing:border-box"></div>
<div class="r" style="left:567.3px;top:247.8px;width:10px;height:10px;background:#fff;border:1px solid #B9B191;border-radius:2.5px;box-sizing:border-box"></div>
<div class="r" style="left:590.8px;top:247.8px;width:10px;height:10px;background:#fff;border:1px solid #B9B191;border-radius:2.5px;box-sizing:border-box"></div>
<div class="r" style="left:613.8px;top:247.8px;width:10px;height:10px;background:#fff;border:1px solid #B9B191;border-radius:2.5px;box-sizing:border-box"></div>
<div class="r" style="left:545.3px;top:262.9px;width:8.5px;height:8.5px;background:#EFE4B6;border-radius:1.5px"></div>
<svg class="r" style="left:546.8px;top:264.9px" width="6" height="5" viewBox="0 0 6 5"><path d="M0.5 2.5 L2.3 4.3 L5.5 0.8" stroke="#A8975A" stroke-width="1.2" fill="none"/></svg>
<div class="r" style="left:568.3px;top:262.9px;width:8.5px;height:8.5px;background:#EFE4B6;border-radius:1.5px"></div>
<svg class="r" style="left:569.8px;top:264.9px" width="6" height="5" viewBox="0 0 6 5"><path d="M0.5 2.5 L2.3 4.3 L5.5 0.8" stroke="#A8975A" stroke-width="1.2" fill="none"/></svg>
<div class="r" style="left:591.8px;top:262.9px;width:8.5px;height:8.5px;background:#EFE4B6;border-radius:1.5px"></div>
<svg class="r" style="left:593.3px;top:264.9px" width="6" height="5" viewBox="0 0 6 5"><path d="M0.5 2.5 L2.3 4.3 L5.5 0.8" stroke="#A8975A" stroke-width="1.2" fill="none"/></svg>
<div class="r" style="left:614.8px;top:262.9px;width:8.5px;height:8.5px;background:#EFE4B6;border-radius:1.5px"></div>
<svg class="r" style="left:616.3px;top:264.9px" width="6" height="5" viewBox="0 0 6 5"><path d="M0.5 2.5 L2.3 4.3 L5.5 0.8" stroke="#A8975A" stroke-width="1.2" fill="none"/></svg>
<div class="r" style="left:545.3px;top:277.4px;width:8.5px;height:8.5px;background:#EFE4B6;border-radius:1.5px"></div>
<svg class="r" style="left:546.8px;top:279.4px" width="6" height="5" viewBox="0 0 6 5"><path d="M0.5 2.5 L2.3 4.3 L5.5 0.8" stroke="#A8975A" stroke-width="1.2" fill="none"/></svg>
<div class="r" style="left:567.3px;top:276.3px;width:10px;height:10px;background:#fff;border:1px solid #B9B191;border-radius:2.5px;box-sizing:border-box"></div>
<div class="r" style="left:591.8px;top:277.4px;width:8.5px;height:8.5px;background:#EFE4B6;border-radius:1.5px"></div>
<svg class="r" style="left:593.3px;top:279.4px" width="6" height="5" viewBox="0 0 6 5"><path d="M0.5 2.5 L2.3 4.3 L5.5 0.8" stroke="#A8975A" stroke-width="1.2" fill="none"/></svg>
<div class="r" style="left:614.8px;top:277.4px;width:8.5px;height:8.5px;background:#EFE4B6;border-radius:1.5px"></div>
<svg class="r" style="left:616.3px;top:279.4px" width="6" height="5" viewBox="0 0 6 5"><path d="M0.5 2.5 L2.3 4.3 L5.5 0.8" stroke="#A8975A" stroke-width="1.2" fill="none"/></svg>
<div class="r" style="left:545.3px;top:291.4px;width:8.5px;height:8.5px;background:#EFE4B6;border-radius:1.5px"></div>
<svg class="r" style="left:546.8px;top:293.4px" width="6" height="5" viewBox="0 0 6 5"><path d="M0.5 2.5 L2.3 4.3 L5.5 0.8" stroke="#A8975A" stroke-width="1.2" fill="none"/></svg>
<div class="r" style="left:567.3px;top:290.3px;width:10px;height:10px;background:#fff;border:1px solid #B9B191;border-radius:2.5px;box-sizing:border-box"></div>
<div class="r" style="left:591.8px;top:291.4px;width:8.5px;height:8.5px;background:#EFE4B6;border-radius:1.5px"></div>
<svg class="r" style="left:593.3px;top:293.4px" width="6" height="5" viewBox="0 0 6 5"><path d="M0.5 2.5 L2.3 4.3 L5.5 0.8" stroke="#A8975A" stroke-width="1.2" fill="none"/></svg>
<div class="r" style="left:614.8px;top:291.4px;width:8.5px;height:8.5px;background:#EFE4B6;border-radius:1.5px"></div>
<svg class="r" style="left:616.3px;top:293.4px" width="6" height="5" viewBox="0 0 6 5"><path d="M0.5 2.5 L2.3 4.3 L5.5 0.8" stroke="#A8975A" stroke-width="1.2" fill="none"/></svg>
<div class="t" style="left:634.5px;top:220.91px;font-size:9.4px;transform:scaleX(0.8829787234042552);color:#1a1a1a;font-weight:normal;">Измерение</div>
<svg class="r" style="left:933px;top:111px" width="12" height="12" viewBox="0 0 12 12"><circle cx="6" cy="6" r="5.5" fill="#C3CDBF"/><path d="M6 3 V9 M3 6 H9" stroke="#E8EDE6" stroke-width="1.4"/></svg>
<svg class="r" style="left:951px;top:111px" width="13" height="12" viewBox="0 0 13 12"><path d="M0.5 0.5 H6 L8.5 3 V10.5 H0.5Z" fill="#CBD6E2"/><circle cx="8.5" cy="8.5" r="3.3" fill="#BECBBA"/><path d="M8.5 6.5 V10.5 M6.5 8.5 H10.5" stroke="#E8EDE6"/></svg>
<svg class="r" style="left:968px;top:111px" width="13" height="13" viewBox="0 0 13 13"><path d="M0.5 1.5 H4 L5 2.5 H10.5 V9.5 H0.5Z" fill="#F6E4A0" stroke="#E0C88A"/><path d="M9 6.5 V12.5 M6 9.5 H12" stroke="#2E9A2E" stroke-width="1.6"/></svg>
<svg class="r" style="left:985px;top:110px" width="12" height="12" viewBox="0 0 12 12"><rect x="1" y="4" width="10" height="7" fill="#CCD3DA"/><path d="M1 6.5 H11 M1 8.8 H11 M4.5 4 V11 M7.5 4 V11" stroke="#E4E8EC" stroke-width="0.6"/><path d="M3.5 0.5 V6 M0.8 3 H6.2" stroke="#9FB59F" stroke-width="1.6"/></svg>
<svg class="r" style="left:1003px;top:113px" width="9" height="9" viewBox="0 0 9 9"><path d="M1 1 L8 8 M8 1 L1 8" stroke="#CDB8B8" stroke-width="1.8"/></svg>
<div class="t" style="left:329px;top:355.71px;font-size:9.4px;transform:scaleX(0.8670212765957445);color:#2f2f2f;font-weight:normal;">Запрос:</div>
<svg class="r" style="left:911px;top:355px" width="12" height="12" viewBox="0 0 12 12"><rect x="0.5" y="0.5" width="10" height="10" fill="#DDE6F0" stroke="#8A9FB5"/><path d="M3 3 L11 11" stroke="#8A6A50" stroke-width="1.4"/><path d="M6 2 L9 2 M8 4 L10 4" stroke="#E07070" stroke-width="0.8"/></svg>
<div class="t" style="left:925px;top:356.91px;font-size:9.4px;transform:scaleX(0.8882978723404255);color:#3a3a2a;font-weight:normal;">Конструктор запроса...</div>
<div class="r" style="left:328.5px;top:371px;width:689.5px;height:69px;background:#fff;border:1px solid #D3CAA8;border-bottom:none;box-sizing:border-box"></div>
<div class="r" style="left:329.5px;top:372px;width:11.5px;height:68px;background:repeating-conic-gradient(#E2DECB 0 25%,#EEEBDD 0 50%) 0 0/2px 2px"></div>
<div class="c" style="left:355.8px;top:374.76px"><b class="k">ВЫБРАТЬ</b></div>
<div class="c" style="left:379.4px;top:386.86px">ЦеныНоменклатурыСрезПоследних.Период <span class="k">КАК</span> Период,</div>
<div class="c" style="left:379.4px;top:398.96px">ЦеныНоменклатурыСрезПоследних.Номенклатура <span class="k">КАК</span> Номенклатура,</div>
<div class="c" style="left:379.4px;top:411.06px">ЦеныНоменклатурыСрезПоследних.Цена <span class="k">КАК</span> Цена</div>
<div class="c" style="left:355.8px;top:423.16px"><span class="k">ИЗ</span></div>
<div class="c" style="left:379.4px;top:435.26px">РегистрСведений.ЦеныНоменклатуры.СрезПоследних <span class="k">КАК</span> ЦеныНоменклатурыСрезПоследних</div>
<svg class="r" style="left:0;top:0" width="1024" height="440"><path d="M591 18.4 L746 90.6" stroke="#FF0000" stroke-width="2.5" stroke-linecap="round"/><path d="M752.3 93.6 L741.3 92.9 L744 86.2Z" fill="#FF0000"/></svg>
</body></html>
